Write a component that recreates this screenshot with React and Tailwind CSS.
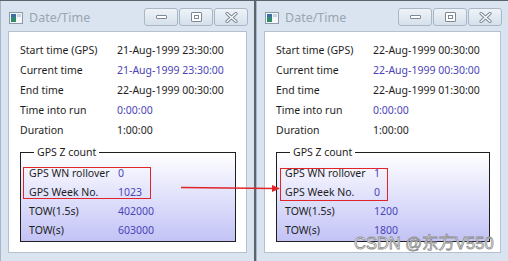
import { useState } from "react";

const font = { fontFamily: '"Noto Sans", "Open Sans", sans-serif' };

const Row = ({ label, value, blue }) => (
  <div className="flex h-[20px] items-center whitespace-nowrap">
    <div className="w-[97px] shrink-0">{label}</div>
    <div className={blue ? "text-[#4b44b8]" : "text-[#1e1e1e]"}>{value}</div>
  </div>
);

const GroupRow = ({ label, value }) => (
  <div className="flex h-[19px] items-center whitespace-nowrap">
    <div className="w-[89px] shrink-0">{label}</div>
    <div className="text-[#4b44b8]">{value}</div>
  </div>
);

const TitleButton = ({ children }) => (
  <div className="w-[34px] h-[18px] rounded-[3px] border border-[#a9b6c4] bg-gradient-to-b from-[#eef3f8] to-[#d5e0eb] flex items-center justify-center">
    {children}
  </div>
);

const Window = ({ data, className }) => (
  <div
    className={`flex flex-col h-full bg-[#d9e4f0] border-l border-[#aab6c2] ${className}`}
  >
    {/* title bar */}
    <div className="h-[30px] flex items-center pl-[8px] pr-[6px] pt-[2px]">
      <svg width="14" height="12" viewBox="0 0 14 12" className="shrink-0 mt-[2px]">
        <rect x="0.5" y="0.5" width="13" height="11" fill="#f4f6f8" stroke="#8e9aa6" />
        <rect x="2" y="2" width="5" height="8" fill="#2f8a6e" />
        <rect x="2" y="2" width="5" height="3" fill="#3c6ea8" />
        <rect x="8" y="2" width="4" height="3" fill="#c9d7e4" />
      </svg>
      <span className="ml-[6px] mt-[3px] text-[12.5px] text-[#9aa5b0]">Date/Time</span>
      <div className="ml-auto flex gap-[1px]">
        <TitleButton>
          <div className="w-[11px] h-[4px] border border-[#7d8894] bg-white rounded-[1px]" />
        </TitleButton>
        <TitleButton>
          <div className="w-[11px] h-[10px] border border-[#7d8894] bg-white flex items-center justify-center rounded-[1px]">
            <div className="w-[5px] h-[4px] border border-[#7d8894]" />
          </div>
        </TitleButton>
        <TitleButton>
          <svg width="13" height="11" viewBox="0 0 13 11">
            <path
              d="M2 1.5 L11 9.5 M11 1.5 L2 9.5"
              stroke="#7d8894"
              strokeWidth="3.2"
              strokeLinecap="round"
            />
            <path
              d="M2 1.5 L11 9.5 M11 1.5 L2 9.5"
              stroke="#ffffff"
              strokeWidth="1.3"
              strokeLinecap="round"
            />
          </svg>
        </TitleButton>
      </div>
    </div>
    {/* client */}
    <div className="flex-1 mx-[7px] mb-[8px] bg-white border border-[#b5c1cd] pt-[9px] pl-[11px] pr-[10px] text-[10.5px] text-[#1e1e1e]">
      <Row label="Start time (GPS)" value={data.start} />
      <Row label="Current time" value={data.current} blue />
      <Row label="End time" value={data.end} />
      <Row label="Time into run" value="0:00:00" blue />
      <Row label="Duration" value="1:00:00" />
      <fieldset className="mt-[4px] h-[97px] border border-[#1f1f1f] bg-gradient-to-b from-[#ffffff] to-[#c3c3f6] pl-[8px] pt-[5px]">
        <legend className="ml-[5px] px-[3px] leading-[14px] text-[10.5px]">GPS Z count</legend>
        <GroupRow label="GPS WN rollover" value={data.rollover} />
        <GroupRow label="GPS Week No." value={data.week} />
        <GroupRow label="TOW(1.5s)" value={data.tow15} />
        <GroupRow label="TOW(s)" value={data.tow} />
      </fieldset>
    </div>
  </div>
);

export default function App() {
  const [left] = useState({
    start: "21-Aug-1999 23:30:00",
    current: "21-Aug-1999 23:30:00",
    end: "22-Aug-1999 00:30:00",
    rollover: "0",
    week: "1023",
    tow15: "402000",
    tow: "603000",
  });
  const [right] = useState({
    start: "22-Aug-1999 00:30:00",
    current: "22-Aug-1999 00:30:00",
    end: "22-Aug-1999 01:30:00",
    rollover: "1",
    week: "0",
    tow15: "1200",
    tow: "1800",
  });

  return (
    <div
      className="relative w-[508px] h-[261px] bg-[#5b636b] pt-[1px] flex gap-[2px] overflow-hidden"
      style={font}
    >
      <div className="w-[254px] h-full">
        <Window data={left} />
      </div>
      <div className="flex-1 h-full">
        <Window data={right} />
      </div>

      {/* annotations */}
      <div className="absolute left-[23px] top-[167px] w-[128px] h-[32px] border-[1.5px] border-[#e0242a]" />
      <div className="absolute left-[280px] top-[168px] w-[108px] h-[33px] border-[1.5px] border-[#e0242a]" />
      <svg className="absolute left-0 top-0" width="508" height="261">
        <line x1="181" y1="187.5" x2="274" y2="188.5" stroke="#e0242a" strokeWidth="1.3" />
        <polygon points="280,188.5 272,185 272,192" fill="#e0242a" />
      </svg>
      <div
        className="absolute left-[354px] top-[233px] whitespace-nowrap text-[16.5px] leading-[20px] text-white [-webkit-text-stroke:0.8px_#8c8c8c]"
        style={{ fontFamily: '"Liberation Sans", "Noto Sans CJK SC", sans-serif' }}
      >
        CSDN @东方V550
      </div>
    </div>
  );
}
